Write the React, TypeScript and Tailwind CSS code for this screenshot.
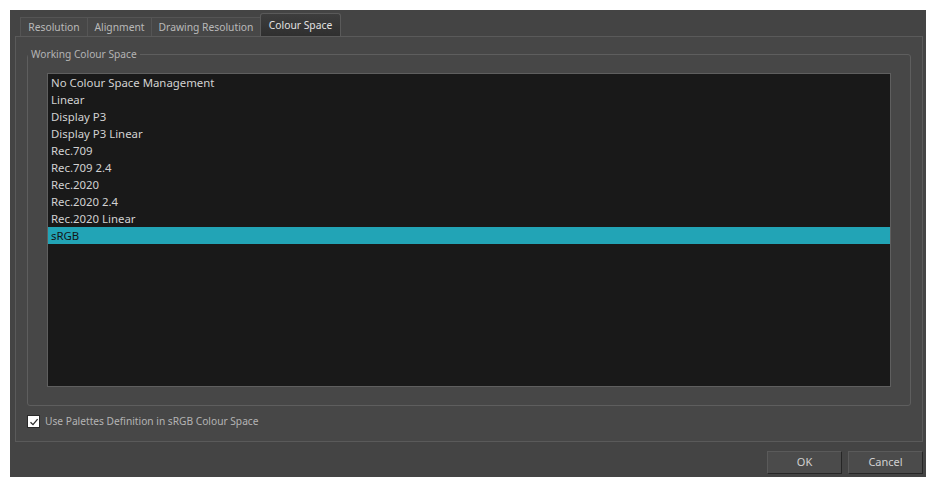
import React from 'react'

const spaces = [
  'No Colour Space Management',
  'Linear',
  'Display P3',
  'Display P3 Linear',
  'Rec.709',
  'Rec.709 2.4',
  'Rec.2020',
  'Rec.2020 2.4',
  'Rec.2020 Linear',
  'sRGB',
]

const tabs = [
  { label: 'Resolution', w: 'w-[67px]' },
  { label: 'Alignment', w: 'w-[64px]' },
  { label: 'Drawing Resolution', w: 'w-[109px]' },
]

const font = { fontFamily: '"Noto Sans", "Open Sans", sans-serif' }

export default function App() {
  const selected = 'sRGB'

  return (
    <div className="h-[487px] w-[936px] bg-white p-[10px]" style={font}>
      <div className="flex h-[467px] w-[916px] flex-col bg-[#444444] text-[10.2px] text-[#c4c4c4]">
        {/* tab bar */}
        <div className="flex h-[26px] items-end pl-[10px] pt-[3px]">
          {tabs.map(t => (
            <div
              key={t.label}
              className={`${t.w} flex h-[19px] items-center justify-center border-t border-l border-[#555555] bg-[#474747] text-[10.3px] leading-none text-[#b9b9b9]`}
            >
              {t.label}
            </div>
          ))}
          <div className="flex h-[23px] w-[81px] items-center justify-center rounded-t-[3px] border border-b-0 border-[#5a5a5a] bg-gradient-to-b from-[#3d3d3d] to-[#2f2f2f] text-[10.3px] leading-none text-[#e2e2e2]">
            Colour Space
          </div>
        </div>

        {/* tab pane */}
        <div className="ml-[5px] mr-[3px] flex h-[406px] flex-col border border-[#5a5a5a] bg-[#474747] px-[11px] pt-[9px]">
          <fieldset className="rounded-[3px] border border-[#5e5e5e] px-[19px] pb-[18px]">
            <legend className="-ml-[19px] px-[3px] leading-[16px] text-[#b4b4b4]">Working Colour Space</legend>
            <div className="mt-[11px] h-[314px] border border-[#5f5f5f] bg-[#191919]">
              {spaces.map(s => (
                <div
                  key={s}
                  className={
                    s === selected
                      ? 'h-[17px] bg-[#22a4b6] pl-[3px] text-[11.4px] leading-[17px] text-[#151515]'
                      : 'h-[17px] pl-[3px] text-[11.4px] leading-[17px] text-[#d2d2d2]'
                  }
                >
                  {s}
                </div>
              ))}
            </div>
          </fieldset>
          <label className="mt-[9px] flex h-[13px] items-center gap-[5px] leading-[13px] text-[#b4b4b4]">
            <span className="flex h-[13px] w-[13px] items-center justify-center border border-[#2a2a2a] bg-white">
              <svg width="10" height="10" viewBox="0 0 10 10">
                <path d="M1.5 5.2 L4 7.6 L8.6 2.2" fill="none" stroke="#2b2b2b" strokeWidth="1.3" />
              </svg>
            </span>
            Use Palettes Definition in sRGB Colour Space
          </label>
        </div>

        {/* buttons */}
        <div className="flex justify-end gap-[6px] pr-[3px] pt-[9px]">
          <button className="h-[23px] w-[75px] border border-t-[#5a5a5a] border-l-[#5a5a5a] border-r-[#262626] border-b-[#262626] bg-[#4b4b4b] text-[11px] text-[#d0d0d0]">
            OK
          </button>
          <button className="h-[23px] w-[75px] border border-t-[#5a5a5a] border-l-[#5a5a5a] border-r-[#262626] border-b-[#262626] bg-[#4b4b4b] text-[11px] text-[#d0d0d0]">
            Cancel
          </button>
        </div>
      </div>
    </div>
  )
}
